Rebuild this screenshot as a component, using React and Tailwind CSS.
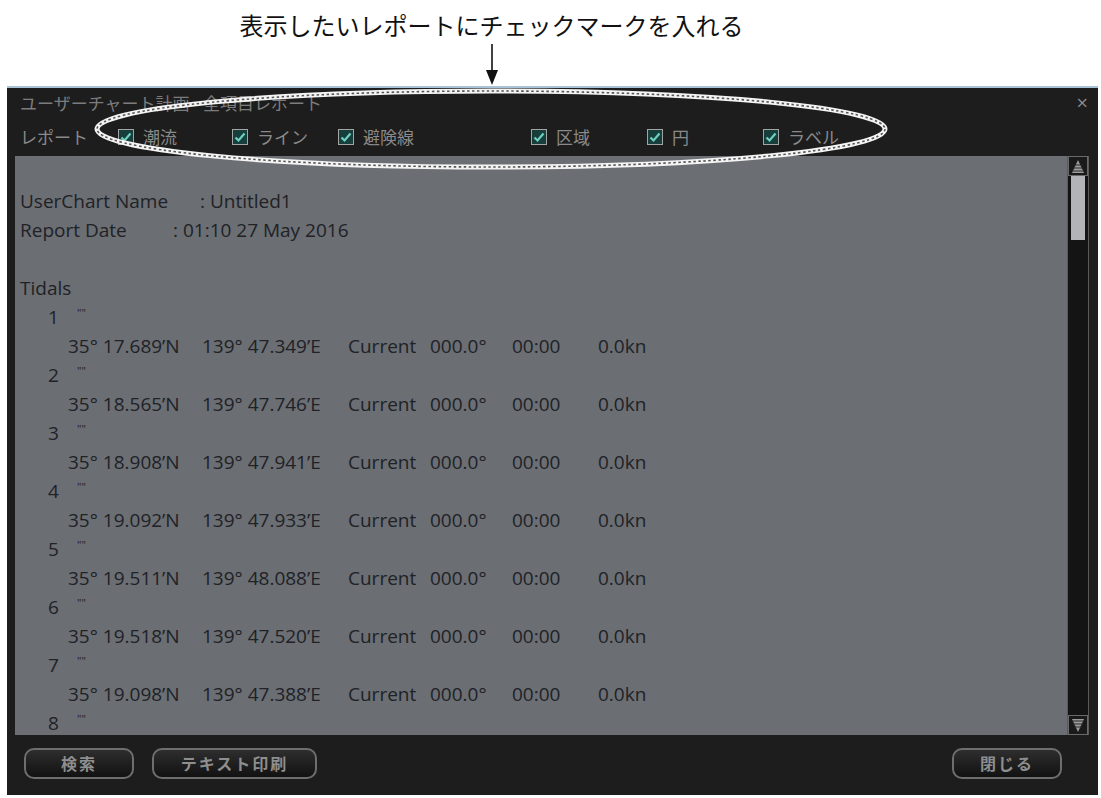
import React from 'react'

const jp = { fontFamily: '"Noto Sans CJK JP", "Noto Sans", sans-serif' }
const latin = { fontFamily: '"Open Sans", "Noto Sans", sans-serif' }

const reports = [
  { label: '潮流', w: 'w-[114px]' },
  { label: 'ライン', w: 'w-[106px]' },
  { label: '避険線', w: 'w-[193px]' },
  { label: '区域', w: 'w-[116px]' },
  { label: '円', w: 'w-[116px]' },
  { label: 'ラベル', w: 'w-[120px]' },
]

const tidals = [
  ['35° 17.689\u2019N', '139° 47.349\u2019E'],
  ['35° 18.565\u2019N', '139° 47.746\u2019E'],
  ['35° 18.908\u2019N', '139° 47.941\u2019E'],
  ['35° 19.092\u2019N', '139° 47.933\u2019E'],
  ['35° 19.511\u2019N', '139° 48.088\u2019E'],
  ['35° 19.518\u2019N', '139° 47.520\u2019E'],
  ['35° 19.098\u2019N', '139° 47.388\u2019E'],
]

function CheckBox() {
  return (
    <span className="inline-flex items-center justify-center w-[16px] h-[16px] border-[1.5px] border-[#a4a4a4] bg-[#163f3c]">
      <svg width="12" height="12" viewBox="0 0 12 12">
        <path d="M1.5 6.5 L4.5 9.5 L10.5 2.5" fill="none" stroke="#6fd0c2" strokeWidth="2.2" />
      </svg>
    </span>
  )
}

function ScrollArrow({ down }) {
  return (
    <div className="h-[20px] flex items-center justify-center bg-[#1a1a1a] border border-[#6a6a6a]">
      <svg width="14" height="15" viewBox="0 0 14 15" className={down ? 'rotate-180' : ''}>
        <path d="M7 1 L13 14 L1 14 Z" fill="#9c9c9c" />
        <path d="M3 6 H11 M2 9 H12 M1 12 H13" stroke="#2a2a2a" strokeWidth="1.2" />
      </svg>
    </div>
  )
}

function Index({ n }) {
  return (
    <div className="flex pl-[28px]">
      <span className="w-[29px]">{n}</span>
      <span className="text-[11px] leading-[20px] self-start">""</span>
    </div>
  )
}

function Button({ children, w }) {
  return (
    <button
      className={`${w} h-[31px] rounded-[10px] border-2 border-[#6e6e6e] bg-gradient-to-b from-[#2e2e2e] to-[#121212] text-[#8e8e8e] text-[16px] font-bold tracking-[2px]`}
      style={jp}
    >
      {children}
    </button>
  )
}

export default function App() {
  return (
    <div className="w-[1101px] h-[798px] bg-white overflow-hidden relative">
      {/* caption */}
      <div className="h-[86px] flex flex-col items-center pr-[118px]">
        <div className="mt-[8px] text-[24px] leading-[34px] text-[#111]" style={jp}>
          表示したいレポートにチェックマークを入れる
        </div>
        <svg width="14" height="42" viewBox="0 0 14 42" className="mt-[2px]">
          <line x1="7" y1="0" x2="7" y2="30" stroke="#111" strokeWidth="1.6" />
          <path d="M1 26 L7 41 L13 26 Z" fill="#111" />
        </svg>
      </div>

      {/* dialog */}
      <div className="ml-[7px] w-[1091px] h-[709px] bg-[#1d1d1d] border-t-2 border-[#a9c3d6] flex flex-col">
        <div className="h-[30px] flex items-center justify-between pl-[13px] pr-[10px]">
          <span className="text-[17px] text-[#7c7c7c]" style={jp}>
            ユーザーチャート計画 - 全項目レポート
          </span>
          <span className="text-[20px] text-[#8a8a8a] leading-none" style={latin}>×</span>
        </div>

        <div className="h-[38px] flex items-center pl-[13px] text-[17px] text-[#8a8a8a]" style={jp}>
          <span className="w-[98px]">レポート</span>
          {reports.map(r => (
            <span key={r.label} className={`${r.w} flex items-center gap-[9px]`}>
              <CheckBox />
              <span>{r.label}</span>
            </span>
          ))}
        </div>

        <div className="flex h-[579px] pl-[8px]">
          <div
            className="w-[1052px] h-full bg-[#6b6e73] overflow-hidden pt-[31px] pl-[5px] text-[19px] leading-[29px] text-[#202226]"
            style={latin}
          >
            <div className="flex">
              <span className="w-[180px]">UserChart Name</span>
              <span>: Untitled1</span>
            </div>
            <div className="flex">
              <span className="w-[153px]">Report Date</span>
              <span>: 01:10 27 May 2016</span>
            </div>
            <div className="h-[29px]" />
            <div>Tidals</div>
            {tidals.map((t, i) => (
              <React.Fragment key={i}>
                <Index n={i + 1} />
                <div className="flex pl-[48px] whitespace-nowrap">
                  <span className="w-[134px]">{t[0]}</span>
                  <span className="w-[146px]">{t[1]}</span>
                  <span className="w-[82px]">Current</span>
                  <span className="w-[82px]">000.0°</span>
                  <span className="w-[86px]">00:00</span>
                  <span>0.0kn</span>
                </div>
              </React.Fragment>
            ))}
            <Index n={8} />
          </div>

          <div className="w-[22px] h-full flex flex-col border-x border-[#5a5a5a] bg-[#141414]">
            <ScrollArrow />
            <div className="h-[64px] mx-[3px] bg-[#b3b4b7]" />
            <div className="flex-1" />
            <ScrollArrow down />
          </div>
        </div>

        <div className="flex-1 flex items-center pl-[17px] pr-[36px] pb-[4px]">
          <Button w="w-[110px]">検索</Button>
          <span className="w-[18px]" />
          <Button w="w-[165px]">テキスト印刷</Button>
          <span className="flex-1" />
          <Button w="w-[110px]">閉じる</Button>
        </div>
      </div>

      {/* annotation ellipse over the dialog */}
      <svg className="absolute left-0 top-0 pointer-events-none" width="1101" height="200">
        <ellipse cx="491" cy="129" rx="394" ry="38" fill="none" stroke="#f4f4f4" strokeWidth="5" />
        <ellipse cx="491" cy="129" rx="394" ry="38" fill="none" stroke="#555" strokeWidth="1.6" strokeDasharray="2.5 2.5" />
      </svg>
    </div>
  )
}
